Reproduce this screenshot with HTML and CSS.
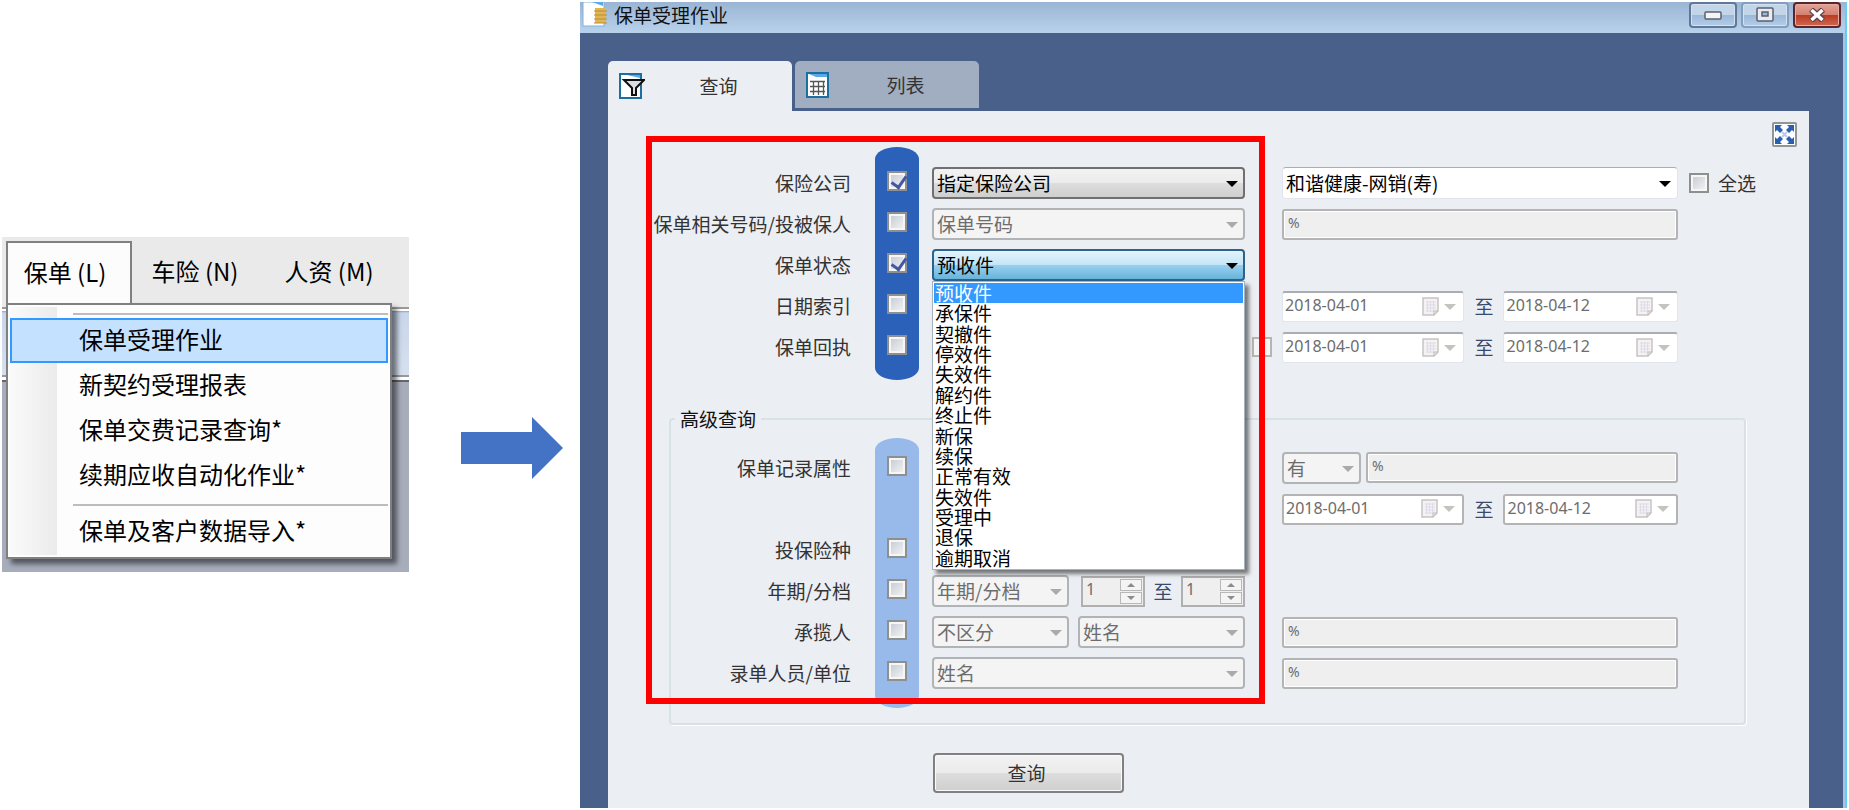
FILE: index.html
```html
<!DOCTYPE html>
<html lang="zh-CN">
<head>
  <meta charset="UTF-8">
  <title>保单受理作业</title>
  <link rel="stylesheet" href="styles.css">
</head>
<body>
  <!-- 主菜单 -->
  <nav class="client">
    <div class="menu-bar">
      <button class="menu-tab active">保单 (L)</button>
      <button class="menu-tab">车险 (N)</button>
      <button class="menu-tab">人资 (M)</button>
    </div>
    <div class="menu-list">
      <hr class="menu-sep">
      <button class="menu-item selected">保单受理作业</button>
      <button class="menu-item">新契约受理报表</button>
      <button class="menu-item">保单交费记录查询*</button>
      <button class="menu-item">续期应收自动化作业*</button>
      <hr class="menu-sep">
      <button class="menu-item">保单及客户数据导入*</button>
    </div>
  </nav>

  <svg class="arrow" width="103" height="64" viewBox="0 0 103 64">
    <path d="M0 16H71V1L102 32L71 63V48H0Z" fill="#4472c4"/>
  </svg>

  <!-- 作业窗口 -->
  <main class="window">
    <header class="title-bar">
      <svg class="title-icon" width="26" height="26" viewBox="0 0 26 26">
        <rect x="1" y="0" width="21" height="24" fill="#fff" stroke="#7db4dc"/>
        <path d="M10 0H21V4Z" fill="#5aa9e6"/>
        <rect x="13" y="6" width="11" height="15" fill="#e0b552"/>
        <path d="M12 9H25M12 13H25M12 17H25M12 21H25" stroke="#b98c34"/>
      </svg>
      <h1 class="title-text">保单受理作业</h1>
      <button class="win-btn" aria-label="最小化">
        <svg width="18" height="10" viewBox="0 0 18 10"><rect x="1" y="2" width="16" height="7" rx="1" fill="#f4f4f4" stroke="#59606e" stroke-width="1.5"/></svg>
      </button>
      <button class="win-btn dim" aria-label="最大化">
        <svg width="18" height="16" viewBox="0 0 18 16"><rect x="1" y="1" width="16" height="13" rx="1" fill="#e8ecf2" stroke="#59606e" stroke-width="1.5"/><rect x="6" y="5" width="6" height="4" fill="#9db9da" stroke="#59606e" stroke-width="1.5"/></svg>
      </button>
      <button class="win-btn close" aria-label="关闭">
        <svg width="18" height="14" viewBox="0 0 18 14"><path d="M3 1.500L15 12.500M15 1.500L3 12.500" stroke="#5d4450" stroke-width="6"/><path d="M3.500 2L14.500 12M14.500 2L3.500 12" stroke="#fff" stroke-width="3.500"/></svg>
      </button>
    </header>

    <div class="window-body">
      <div class="tabs">
        <button class="tab active">
          <svg width="26" height="26" viewBox="0 0 26 26">
            <rect x="1" y="1" width="21" height="24" fill="#fff" stroke="#1d6f9f" stroke-width="2"/>
            <path d="M8 2H21V5Z" fill="#5aa9e6"/>
            <path d="M5 7H25L17 15V22H13V15Z" fill="#d9e0e4" stroke="#111" stroke-width="2"/>
          </svg>
          <span class="tab-text">查询</span>
        </button>
        <button class="tab">
          <svg width="26" height="26" viewBox="0 0 26 26">
            <rect x="1" y="1" width="21" height="24" fill="#fff" stroke="#1d6f9f" stroke-width="2"/>
            <path d="M3 2H21V5H10Z" fill="#5aa9e6"/>
            <path d="M4 9.500H19M4 14.500H19M4 19.500H19M7.500 9V23M12.500 9V23M17.500 9V23" stroke="#555" stroke-width="1.300" fill="none"/>
          </svg>
          <span class="tab-text">列表</span>
        </button>
      </div>

      <form class="panel">
        <div class="panel-tools">
          <button type="button" class="expand" aria-label="展开">
            <svg width="21" height="21" viewBox="0 0 21 21">
              <path d="M1 1H8L6 3L9 6L6 9L3 6L1 8ZM20 1H13L15 3L12 6L15 9L18 6L20 8ZM1 20H8L6 18L9 15L6 12L3 15L1 13ZM20 20H13L15 18L12 15L15 12L18 15L20 13Z" fill="#2a5fb0"/>
              <path d="M8 8L13 13M13 8L8 13" stroke="#b9cbe6" stroke-width="2"/>
            </svg>
          </button>
        </div>

        <!-- 基本查询 -->
        <div class="grid basic">
          <div class="bar">
            <input type="checkbox" class="check" id="c1" checked>
            <input type="checkbox" class="check" id="c2">
            <input type="checkbox" class="check" id="c3" checked>
            <input type="checkbox" class="check" id="c4">
            <input type="checkbox" class="check" id="c5">
          </div>

          <label class="name" for="c1">保险公司</label>
          <div class="combo col-mid">
            <select aria-label="保险公司范围"><option>指定保险公司</option></select>
          </div>
          <div class="combo plain col-right">
            <select aria-label="保险公司"><option>和谐健康-网销(寿)</option></select>
          </div>
          <div class="col-end">
            <input type="checkbox" class="check" id="all">
            <label for="all">全选</label>
          </div>

          <label class="name" for="c2">保单相关号码/投被保人</label>
          <div class="combo disabled col-mid">
            <select aria-label="号码类型" disabled><option>保单号码</option></select>
          </div>
          <input type="text" class="text col-right" aria-label="号码" value="%" disabled>

          <label class="name" for="c3">保单状态</label>
          <div class="combo open col-mid">
            <select aria-label="保单状态"><option>预收件</option></select>
            <ul class="options">
              <li class="current">预收件</li>
              <li>承保件</li>
              <li>契撤件</li>
              <li>停效件</li>
              <li>失效件</li>
              <li>解约件</li>
              <li>终止件</li>
              <li>新保</li>
              <li>续保</li>
              <li>正常有效</li>
              <li>失效件</li>
              <li>受理中</li>
              <li>退保</li>
              <li>逾期取消</li>
            </ul>
          </div>

          <label class="name" for="c4">日期索引</label>
          <div class="range col-right">
            <div class="date">
              <input type="text" aria-label="索引开始日期" value="2018-04-01" disabled>
              <svg class="cal" width="18" height="20" viewBox="0 0 18 20"><path d="M1 1H16V14L12 18H1Z" fill="#f4f2f2" stroke="#c9c4c4" stroke-width="1.500"/><path d="M4 5H14M4 8H14M4 11H14M4 14H11M5.500 4V15M8.500 4V15M11.500 4V15" stroke="#dcdcea"/><path d="M12 18V14H16" fill="none" stroke="#c0baba"/></svg>
            </div>
            <span class="to">至</span>
            <div class="date">
              <input type="text" aria-label="索引结束日期" value="2018-04-12" disabled>
              <svg class="cal" width="18" height="20" viewBox="0 0 18 20"><path d="M1 1H16V14L12 18H1Z" fill="#f4f2f2" stroke="#c9c4c4" stroke-width="1.500"/><path d="M4 5H14M4 8H14M4 11H14M4 14H11M5.500 4V15M8.500 4V15M11.500 4V15" stroke="#dcdcea"/><path d="M12 18V14H16" fill="none" stroke="#c0baba"/></svg>
            </div>
          </div>

          <label class="name" for="c5">保单回执</label>
          <div class="range col-right with-check">
            <input type="checkbox" class="check faint" aria-label="回执日期" disabled>
            <div class="date">
              <input type="text" aria-label="回执开始日期" value="2018-04-01" disabled>
              <svg class="cal" width="18" height="20" viewBox="0 0 18 20"><path d="M1 1H16V14L12 18H1Z" fill="#f4f2f2" stroke="#c9c4c4" stroke-width="1.500"/><path d="M4 5H14M4 8H14M4 11H14M4 14H11M5.500 4V15M8.500 4V15M11.500 4V15" stroke="#dcdcea"/><path d="M12 18V14H16" fill="none" stroke="#c0baba"/></svg>
            </div>
            <span class="to">至</span>
            <div class="date">
              <input type="text" aria-label="回执结束日期" value="2018-04-12" disabled>
              <svg class="cal" width="18" height="20" viewBox="0 0 18 20"><path d="M1 1H16V14L12 18H1Z" fill="#f4f2f2" stroke="#c9c4c4" stroke-width="1.500"/><path d="M4 5H14M4 8H14M4 11H14M4 14H11M5.500 4V15M8.500 4V15M11.500 4V15" stroke="#dcdcea"/><path d="M12 18V14H16" fill="none" stroke="#c0baba"/></svg>
            </div>
          </div>
        </div>

        <!-- 高级查询 -->
        <fieldset class="advanced">
          <legend>高级查询</legend>
          <div class="grid">
            <div class="bar light">
              <input type="checkbox" class="check tall" id="a1">
              <input type="checkbox" class="check" id="a2">
              <input type="checkbox" class="check" id="a3">
              <input type="checkbox" class="check" id="a4">
              <input type="checkbox" class="check" id="a5">
            </div>

            <label class="name" for="a1">保单记录属性</label>
            <div class="pair col-right">
              <div class="combo disabled short">
                <select aria-label="有无" disabled><option>有</option></select>
              </div>
              <input type="text" class="text" aria-label="记录属性" value="%" disabled>
            </div>

            <div class="range col-right">
              <div class="date framed">
                <input type="text" aria-label="记录开始日期" value="2018-04-01" disabled>
                <svg class="cal" width="18" height="20" viewBox="0 0 18 20"><path d="M1 1H16V14L12 18H1Z" fill="#f4f2f2" stroke="#c9c4c4" stroke-width="1.500"/><path d="M4 5H14M4 8H14M4 11H14M4 14H11M5.500 4V15M8.500 4V15M11.500 4V15" stroke="#dcdcea"/><path d="M12 18V14H16" fill="none" stroke="#c0baba"/></svg>
              </div>
              <span class="to">至</span>
              <div class="date framed">
                <input type="text" aria-label="记录结束日期" value="2018-04-12" disabled>
                <svg class="cal" width="18" height="20" viewBox="0 0 18 20"><path d="M1 1H16V14L12 18H1Z" fill="#f4f2f2" stroke="#c9c4c4" stroke-width="1.500"/><path d="M4 5H14M4 8H14M4 11H14M4 14H11M5.500 4V15M8.500 4V15M11.500 4V15" stroke="#dcdcea"/><path d="M12 18V14H16" fill="none" stroke="#c0baba"/></svg>
              </div>
            </div>

            <label class="name third" for="a2">投保险种</label>

            <label class="name" for="a3">年期/分档</label>
            <div class="split col-mid">
              <div class="combo disabled">
                <select aria-label="年期分档" disabled><option>年期/分档</option></select>
              </div>
              <div class="spins">
                <div class="spin">
                  <input type="number" aria-label="最小值" value="1" disabled>
                  <span class="spin-btns"><i class="up"></i><i class="down"></i></span>
                </div>
                <span class="to">至</span>
                <div class="spin">
                  <input type="number" aria-label="最大值" value="1" disabled>
                  <span class="spin-btns"><i class="up"></i><i class="down"></i></span>
                </div>
              </div>
            </div>

            <label class="name" for="a4">承揽人</label>
            <div class="split col-mid">
              <div class="combo disabled">
                <select aria-label="承揽人区分" disabled><option>不区分</option></select>
              </div>
              <div class="combo disabled">
                <select aria-label="承揽人条件" disabled><option>姓名</option></select>
              </div>
            </div>
            <input type="text" class="text col-right" aria-label="承揽人" value="%" disabled>

            <label class="name" for="a5">录单人员/单位</label>
            <div class="combo disabled col-mid">
              <select aria-label="录单条件" disabled><option>姓名</option></select>
            </div>
            <input type="text" class="text col-right" aria-label="录单人员" value="%" disabled>
          </div>
        </fieldset>

        <button type="button" class="submit">查询</button>

        <!-- 红框标注 -->
        <div class="mark"></div>
      </form>
    </div>
  </main>
</body>
</html>
```

FILE: styles.css
```css
* {
  box-sizing: border-box;
}
body {
  margin: 0;
  min-height: 100vh;
  display: flex;
  align-items: flex-start;
  background: #fff;
  color: #333;
  font-family: "Noto Sans CJK SC", sans-serif;
  font-size: 19px;
  line-height: 24px;
}
button, input, select {
  font: inherit;
  color: inherit;
  margin: 0;
}
button {
  padding: 0;
}

/* 左侧菜单 */
.client {
  flex: none;
  width: 407px;
  margin: 237px 0 0 2px;
  padding: 4px 17px 13px 4px;
  background: linear-gradient(#eaeaea 70px, #999 70px, #999 72px, #fff 72px, #fff 74px, #8aa5d0 74px, #c9d6ea 76px, #d6e0ef 138px, #999 138px, #999 140px, #fff 140px, #fff 143px, #666 143px, #666 145px, #a7adbb 145px);
  color: #000;
  font-size: 24px;
}
.menu-bar {
  display: flex;
  margin-right: -17px;
}
.menu-tab {
  height: 62px;
  width: 134px;
  padding: 0 8px 2px 0;
  border: 2px solid transparent;
  background: none;
}
.menu-tab.active {
  position: relative;
  z-index: 1;
  width: 126px;
  margin-bottom: -2px;
  border-color: #808080;
  border-bottom: 0;
  background: #fcfcfc;
}
.menu-list {
  padding: 2px 2px 3px;
  border: 2px solid #808080;
  background: linear-gradient(90deg, #fafafa, #ebebeb) 2px 2px / 47px calc(100% - 4px) no-repeat #fdfdfd;
  box-shadow: 5px 5px 5px rgba(0, 0, 0, 0.5);
}
.menu-sep {
  height: 2px;
  margin: 6px 0 3px 63px;
  border: 0;
  background: #bdbdbd;
}
.menu-item {
  display: block;
  width: 100%;
  height: 45px;
  padding: 0 0 4px 67px;
  border: 2px solid transparent;
  background: none;
  text-align: left;
}
.menu-item.selected {
  border-color: #3399ff;
  background: #c4e1ff;
}

.arrow {
  flex: none;
  margin: 416px 16px 0 52px;
}

/* 窗口 */
.window {
  flex: 1;
  align-self: stretch;
  display: flex;
  flex-direction: column;
  margin: 2px 2px 2px 0;
  border-right: 2px solid #62cdf5;
}
.title-bar {
  display: flex;
  align-items: flex-start;
  gap: 4px;
  height: 31px;
  padding: 0 4px 0 2px;
  background: linear-gradient(#9ab5d3, #b9d2ec);
}
.title-text {
  flex: 1;
  margin: 1px 0 0 2px;
  color: #111;
  font-size: 19px;
  font-weight: normal;
}
.win-btn {
  display: flex;
  align-items: center;
  justify-content: center;
  width: 48px;
  height: 26px;
  border: 2px solid #5f7898;
  border-radius: 4px;
  background: linear-gradient(#c3d5e9 50%, #9bb8d8 50%, #b4cde8);
  box-shadow: inset 0 0 0 1px #d3e1f0;
}
.win-btn.dim {
  border-color: #839dbf;
}
.win-btn.close {
  border-color: #5b2530;
  background: linear-gradient(#e5a297, #d57f70 50%, #b93a22 50%, #d0674d);
  box-shadow: inset 0 0 0 1px #e6aca0;
}
.window-body {
  flex: 1;
  display: flex;
  flex-direction: column;
  padding: 28px 34px 0 28px;
  border-right: 2px solid #a9c3e2;
  background: #48608a;
}

/* 标签页 */
.tabs {
  display: flex;
  align-items: flex-start;
  gap: 3px;
}
.tab {
  display: flex;
  align-items: center;
  width: 184px;
  height: 47px;
  padding-left: 11px;
  border: 0;
  border-radius: 5px 5px 0 0;
  background: #a1adc0;
}
.tab.active {
  height: 50px;
  background: #ebeef3;
}
.tab-text {
  flex: 1;
  text-align: center;
}

.panel {
  position: relative;
  flex: 1;
  padding: 11px 55px 12px 40px;
  background: #ebeef3;
}
.panel-tools {
  display: flex;
  justify-content: flex-end;
  margin-right: -43px;
}
.expand {
  display: flex;
  align-items: center;
  justify-content: center;
  width: 25px;
  height: 25px;
  border: 2px solid #8f9794;
  border-radius: 2px;
  background: #fff;
}

/* 查询条件 */
.grid {
  display: grid;
  grid-template-columns: 180px 81px 313px minmax(0, 1fr) 66px;
  grid-auto-rows: 32px;
  row-gap: 9px;
  align-items: center;
  padding: 21px 0 34px;
}
.grid.basic {
  grid-template-columns: 203px 81px 313px minmax(0, 1fr) 76px;
  padding: 20px 0 17px;
}
.bar {
  grid-area: 1 / 2 / 6 / 3;
  align-self: stretch;
  display: flex;
  flex-direction: column;
  align-items: center;
  gap: 21px;
  width: 44px;
  margin: -20px 0 -17px 24px;
  padding-top: 24px;
  border-radius: 22px / 12px;
  background: #2c61b9;
}
.bar.light {
  grid-row: 1 / 7;
  margin: -14px 0 -19px 24px;
  padding-top: 18px;
  background: #98baea;
}
.name {
  grid-column: 1;
  justify-self: end;
  white-space: nowrap;
}
.name.third {
  grid-row: 3;
}
.col-mid {
  grid-column: 3;
}
.col-right {
  grid-column: 4;
  margin-left: 37px;
}
.col-end {
  grid-column: 5;
  display: flex;
  align-items: center;
  gap: 9px;
  padding-left: 11px;
  white-space: nowrap;
}

.check {
  appearance: none;
  flex: none;
  display: block;
  width: 20px;
  height: 20px;
  border: 2px solid #8e8f8f;
  background: linear-gradient(135deg, #c3c8d2, #f6f6f6);
  box-shadow: inset 0 0 0 2px #f6f6f6;
}
.check.tall {
  margin-bottom: 41px;
}
.check.faint {
  border-color: #b5b5b5;
  background: #f4f4f4;
}
.check:checked::after {
  content: "";
  display: block;
  width: 7px;
  height: 12px;
  margin: 0 0 0 5px;
  border: solid #4258a4;
  border-width: 0 3px 3px 0;
  transform: rotate(35deg);
}

.combo {
  position: relative;
  height: 32px;
}
.combo select {
  appearance: none;
  width: 100%;
  height: 100%;
  padding: 0 24px 0 3px;
  border: 2px solid #707070;
  border-radius: 4px;
  background: linear-gradient(#f2f2f2, #ebebeb 50%, #dddddd 50%, #cfcfcf);
  color: #000;
  opacity: 1;
}
.combo::after {
  content: "";
  position: absolute;
  top: 14px;
  right: 7px;
  border: 6px solid transparent;
  border-top-color: #000;
  border-bottom: 0;
  pointer-events: none;
}
.combo.plain select {
  border: 1px solid #e1e6ee;
  border-top-color: #abadb3;
  background: #fff;
}
.combo.disabled select {
  border-color: #b0b4b6;
  background: #f4f4f4;
  color: #6d6d6d;
}
.combo.disabled::after {
  border-top-color: #aaa;
}
.combo.open select {
  border-color: #2c628b;
  background: linear-gradient(#e3f4fc, #c4e5f6 50%, #98d1ef 50%, #68b3db);
}
.options {
  position: absolute;
  z-index: 2;
  top: 100%;
  left: 0;
  width: 100%;
  height: 289px;
  display: grid;
  grid-auto-rows: 1fr;
  margin: 0;
  padding: 1px;
  list-style: none;
  border: 1px solid #a5b2c0;
  background: #fff;
  box-shadow: 4px 4px 4px rgba(0, 0, 0, 0.5);
  color: #000;
  line-height: 20px;
}
.options li {
  padding-left: 1px;
}
.options .current {
  background: #3399ff;
  color: #fff;
}

.text {
  width: auto;
  min-width: 0;
  height: 31px;
  padding: 0 4px 4px;
  border: 2px solid #b4b4b4;
  border-radius: 3px;
  background: #efefef;
  box-shadow: inset 0 0 0 1px #fff;
  color: #6d6d6d;
  font-family: "Noto Sans", sans-serif;
  font-size: 14px;
}
.pair {
  display: flex;
  gap: 5px;
}
.pair .short {
  width: 79px;
}
.pair .text {
  flex: 1;
}

.range {
  position: relative;
  display: grid;
  grid-template-columns: 183fr 39px 175fr;
  align-items: center;
}
.with-check .check {
  position: absolute;
  left: -30px;
}
.date {
  display: flex;
  align-items: center;
  gap: 4px;
  height: 31px;
  padding-right: 7px;
  border: 1px solid #e1e6ee;
  border-top: 2px solid #abadb3;
  border-radius: 3px;
  background: #fff;
}
.date.framed {
  border: 2px solid #b4b4b4;
}
.date input {
  flex: 1;
  width: 0;
  padding: 0 0 3px 2px;
  border: 0;
  background: none;
  color: #6d6d6d;
  font-family: "Noto Sans", sans-serif;
  font-size: 16px;
}
.date::after {
  content: "";
  border: 6px solid transparent;
  border-top-color: #c4c4be;
  border-bottom: 0;
}
.to {
  color: #3a4a6d;
  text-align: center;
}

.split {
  display: grid;
  grid-template-columns: 137px 1fr;
  gap: 9px;
}
.spins {
  display: flex;
  align-items: center;
  justify-content: space-between;
  padding-left: 3px;
}
.spin {
  display: flex;
  width: 64px;
  height: 31px;
  border: 2px solid #b0b0b0;
  background: #efefef;
}
.spin input {
  appearance: textfield;
  flex: 1;
  width: 0;
  padding: 0 0 4px 3px;
  border: 0;
  background: none;
  color: #6d6d6d;
  font-family: "Noto Sans", sans-serif;
  font-size: 16px;
}
.spin input::-webkit-inner-spin-button {
  display: none;
}
.spin-btns {
  display: grid;
  gap: 1px;
  width: 22px;
  margin: 1px;
}
.spin-btns i {
  display: grid;
  place-items: center;
  border: 1px solid #b8b8b8;
  background: #f4f4f4;
}
.spin-btns i::after {
  content: "";
  border: 4px solid transparent;
}
.spin-btns .up::after {
  border-bottom-color: #8c8c8c;
  border-top: 0;
}
.spin-btns .down::after {
  border-top-color: #8c8c8c;
  border-bottom: 0;
}

.advanced {
  min-width: 0;
  margin: 27px 8px 0 21px;
  padding: 0;
  border: 2px solid #d8e1e8;
  border-radius: 4px;
  box-shadow: 1px 1px 0 #fff;
}
.advanced legend {
  margin-left: 4px;
  padding: 0 5px;
  color: #111;
}

.submit {
  width: 191px;
  height: 40px;
  margin: 28px 0 0 285px;
  padding-right: 4px;
  border: 2px solid #808080;
  border-radius: 4px;
  background: linear-gradient(#f2f2f2, #ebebeb 50%, #dddddd 50%, #cfcfcf);
  box-shadow: inset 0 0 0 1px #fafafa;
}

.mark {
  position: absolute;
  z-index: 3;
  top: 25px;
  left: 38px;
  width: 619px;
  height: 568px;
  border: 6px solid #f00;
  pointer-events: none;
}
```
